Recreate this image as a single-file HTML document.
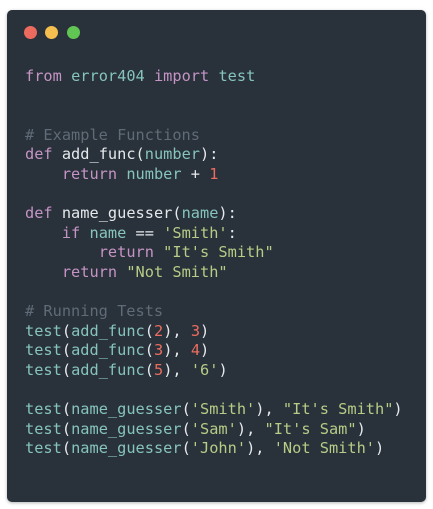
<!DOCTYPE html>
<html><head><style>
html,body{margin:0;padding:0;background:#fff;width:433px;height:509px;overflow:hidden}
.card{position:absolute;left:7px;top:10px;width:419px;height:492px;background:#29313a;border-radius:5px;box-shadow:0 1px 3px rgba(0,0,0,.3)}
.dot{position:absolute;top:16px;width:13px;height:13px;border-radius:50%}
pre{position:absolute;left:18px;top:57px;margin:0;font-family:"DejaVu Sans Mono","Liberation Mono",monospace;font-size:15.3px;line-height:19.6px;color:#e6e9ec}
.k{color:#c594c5}.t{color:#86c4bd}.s{color:#b7cc86}.n{color:#ea6d5f}.c{color:#5f6b77}
</style></head><body>
<div class="card">
<div class="dot" style="left:17px;background:#ec6a5e"></div>
<div class="dot" style="left:38px;background:#f4bf4f"></div>
<div class="dot" style="left:60px;background:#61c554"></div>
<pre><span class="k">from</span> <span class="t">error404</span> <span class="k">import</span> <span class="t">test</span>


<span class="c"># Example Functions</span>
<span class="k">def</span> add_func(<span class="t">number</span>):
    <span class="k">return</span> <span class="t">number</span> + <span class="n">1</span>

<span class="k">def</span> name_guesser(<span class="t">name</span>):
    <span class="k">if</span> <span class="t">name</span> == <span class="s">'Smith'</span>:
        <span class="k">return</span> <span class="s">"It's Smith"</span>
    <span class="k">return</span> <span class="s">"Not Smith"</span>

<span class="c"># Running Tests</span>
<span class="t">test</span>(<span class="t">add_func</span>(<span class="n">2</span>), <span class="n">3</span>)
<span class="t">test</span>(<span class="t">add_func</span>(<span class="n">3</span>), <span class="n">4</span>)
<span class="t">test</span>(<span class="t">add_func</span>(<span class="n">5</span>), <span class="s">'6'</span>)

<span class="t">test</span>(<span class="t">name_guesser</span>(<span class="s">'Smith'</span>), <span class="s">"It's Smith"</span>)
<span class="t">test</span>(<span class="t">name_guesser</span>(<span class="s">'Sam'</span>), <span class="s">"It's Sam"</span>)
<span class="t">test</span>(<span class="t">name_guesser</span>(<span class="s">'John'</span>), <span class="s">'Not Smith'</span>)</pre>
</div>
</body></html>
